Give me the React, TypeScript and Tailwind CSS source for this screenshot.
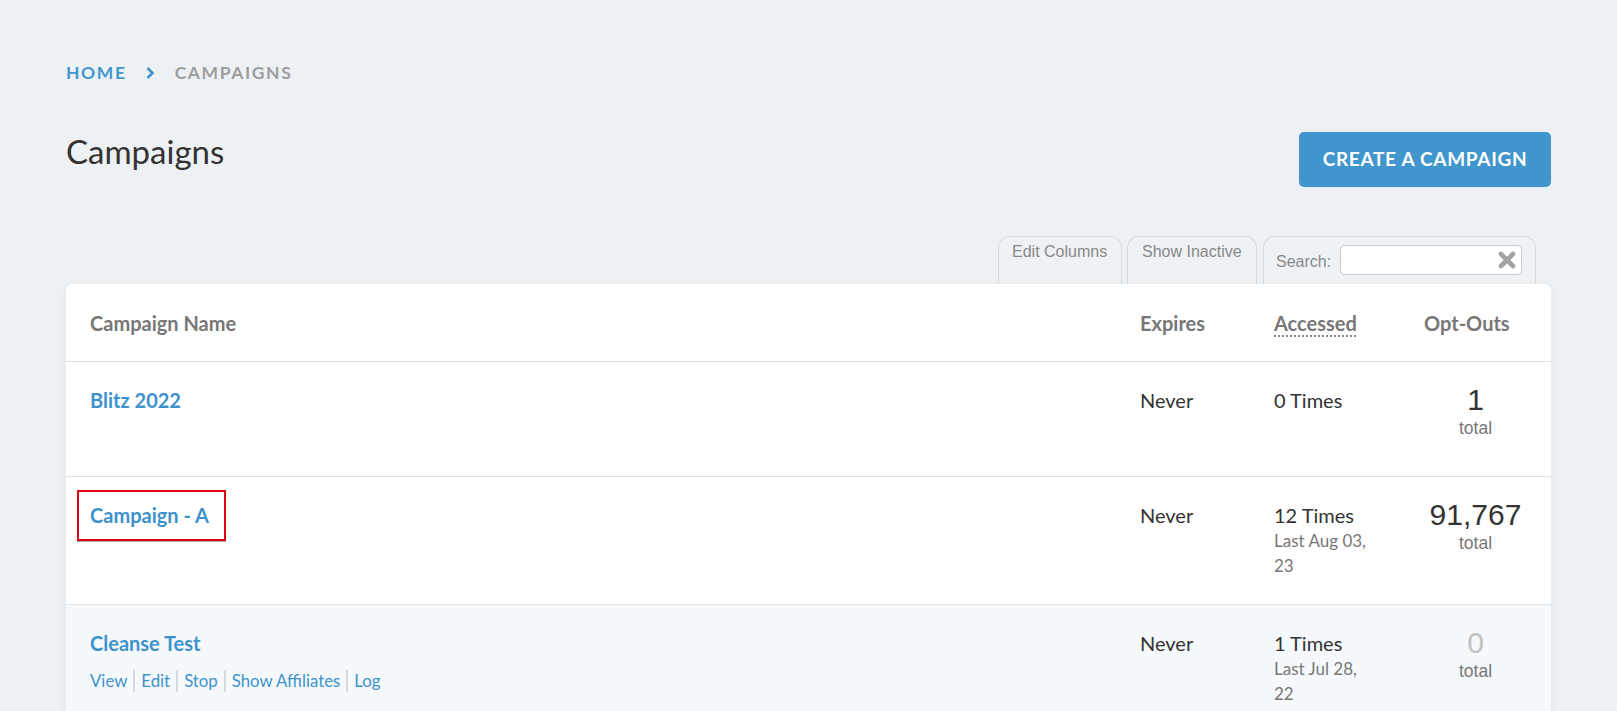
import React from "react";

const SANS = "font-['Lato','Noto_Sans',sans-serif]";
const ARIAL = "font-['Liberation_Sans','Arial',sans-serif]";

function Chevron() {
  return (
    <svg width="10" height="14" viewBox="0 0 10 14" className="ml-[18px] mr-[20px]">
      <path d="M2.5 2 L7.5 7 L2.5 12" fill="none" stroke="#4196ce" strokeWidth="2.6" strokeLinecap="butt" />
    </svg>
  );
}

function ClearIcon() {
  return (
    <svg width="20" height="20" viewBox="0 0 20 20">
      <path d="M4 4 L16 16 M16 4 L4 16" stroke="#a3a3a3" strokeWidth="4.6" strokeLinecap="round" />
    </svg>
  );
}

type Row = {
  name: string;
  expires: string;
  times: string;
  last?: [string, string];
  opt: string;
  optMuted?: boolean;
  highlight?: boolean;
  hover?: boolean;
};

const rows: Row[] = [
  { name: "Blitz 2022", expires: "Never", times: "0 Times", opt: "1" },
  { name: "Campaign - A", expires: "Never", times: "12 Times", last: ["Last Aug 03,", "23"], opt: "91,767", highlight: true },
  { name: "Cleanse Test", expires: "Never", times: "1 Times", last: ["Last Jul 28,", "22"], opt: "0", optMuted: true, hover: true },
];

const actions = ["View", "Edit", "Stop", "Show Affiliates", "Log"];

export default function App() {
  return (
    <div className={`min-h-[711px] w-full bg-[#eef1f4] px-[66px] pt-[60px] ${SANS}`}>
      {/* Breadcrumb */}
      <div className="flex h-[26px] items-center text-[17.5px] font-bold tracking-[1.6px]">
        <span className="text-[#4196ce]">HOME</span>
        <Chevron />
        <span className="text-[#9d9d9d]">CAMPAIGNS</span>
      </div>

      {/* Title row */}
      <div className="mt-[46px] flex items-start justify-between">
        <h1 className="-mt-[3px] text-[33px] leading-[44px] font-normal text-[#333]">Campaigns</h1>
        <button className="h-[55px] w-[252px] rounded-[5px] bg-[#4196ce] text-[19px] font-bold tracking-[0.7px] text-white">
          CREATE A CAMPAIGN
        </button>
      </div>

      {/* Tabs */}
      <div className={`mt-[49px] flex h-[48px] justify-end gap-[5px] pr-[15px] text-[16px] leading-[24px] text-[#888] ${ARIAL}`}>
        <div className="w-[124px] rounded-t-[12px] border border-b-0 border-[#d6dbe0] bg-[#eff2f5] pl-[13px] pt-[3px]">
          Edit Columns
        </div>
        <div className="w-[130px] rounded-t-[12px] border border-b-0 border-[#d6dbe0] bg-[#eff2f5] pl-[14px] pt-[3px]">
          Show Inactive
        </div>
        <div className="ml-[1px] flex w-[273px] items-start rounded-t-[12px] border border-b-0 border-[#d6dbe0] bg-[#eff2f5] pl-[12px] pr-[13px] pt-[8px]">
          <span className="pt-[5px]">Search:</span>
          <div className="ml-[9px] flex h-[30px] flex-1 items-center justify-end rounded-[5px] border border-[#cccccc] bg-white pr-[4px]">
            <ClearIcon />
          </div>
        </div>
      </div>

      {/* Card */}
      <div className="relative overflow-hidden rounded-t-[6px] bg-white shadow-[0_1px_6px_rgba(0,0,0,0.06)]">
        {/* Header */}
        <div className="grid h-[78px] grid-cols-[1fr_134px_150px_151px] items-center border-b border-[#e0e3e6] text-[20px] font-bold text-[#777]">
          <div className="pl-[24px]">Campaign Name</div>
          <div className="pl-[24px]">Expires</div>
          <div className="pl-[24px]">
            <span className="underline decoration-dotted decoration-[#888] decoration-[2px] underline-offset-[5px]">Accessed</span>
          </div>
          <div className="pl-[24px]">Opt-Outs</div>
        </div>

        {rows.map((r) => (
          <div
            key={r.name}
            className={`grid grid-cols-[1fr_134px_150px_151px] border-b border-[#e0e3e6] pt-[25px] pb-[26px] ${r.hover ? "bg-[#f5f9fc]" : "bg-white"}`}
          >
            <div className="pl-[24px]">
              <div className="relative inline-block text-[20px] leading-[26px] font-bold text-[#3e92cc]">
                {r.name}
                {r.highlight && (
                  <span className="absolute -left-[13px] -top-[12px] h-[51px] w-[149px] border-2 border-[#e0000f] shadow-[0_1px_0_rgba(0,0,0,0.35)]" />
                )}
              </div>
              <div className={`mt-[12px] flex items-center text-[16.8px] leading-[24px] text-[#3e92cc] ${r.hover ? "visible" : "invisible"}`}>
                {actions.map((a, j) => (
                  <React.Fragment key={a}>
                    {j > 0 && <span className="mx-[6px] h-[22px] w-[2px] bg-[#d8d8d8]" />}
                    <span>{a}</span>
                  </React.Fragment>
                ))}
              </div>
            </div>
            <div className="pl-[24px] text-[20px] leading-[26px] text-[#333]">{r.expires}</div>
            <div className="pl-[24px]">
              <div className="text-[20px] leading-[26px] text-[#333]">{r.times}</div>
              {r.last && (
                <div className="text-[17px] leading-[25px] text-[#777]">
                  <div>{r.last[0]}</div>
                  <div>{r.last[1]}</div>
                </div>
              )}
            </div>
            <div className={`text-center ${ARIAL}`}>
              <div className={`text-[30px] leading-[26px] ${r.optMuted ? "text-[#c2c2c2]" : "text-[#333]"}`}>{r.opt}</div>
              <div className="text-[17.5px] leading-[30px] text-[#777]">total</div>
            </div>
          </div>
        ))}
      </div>
    </div>
  );
}
